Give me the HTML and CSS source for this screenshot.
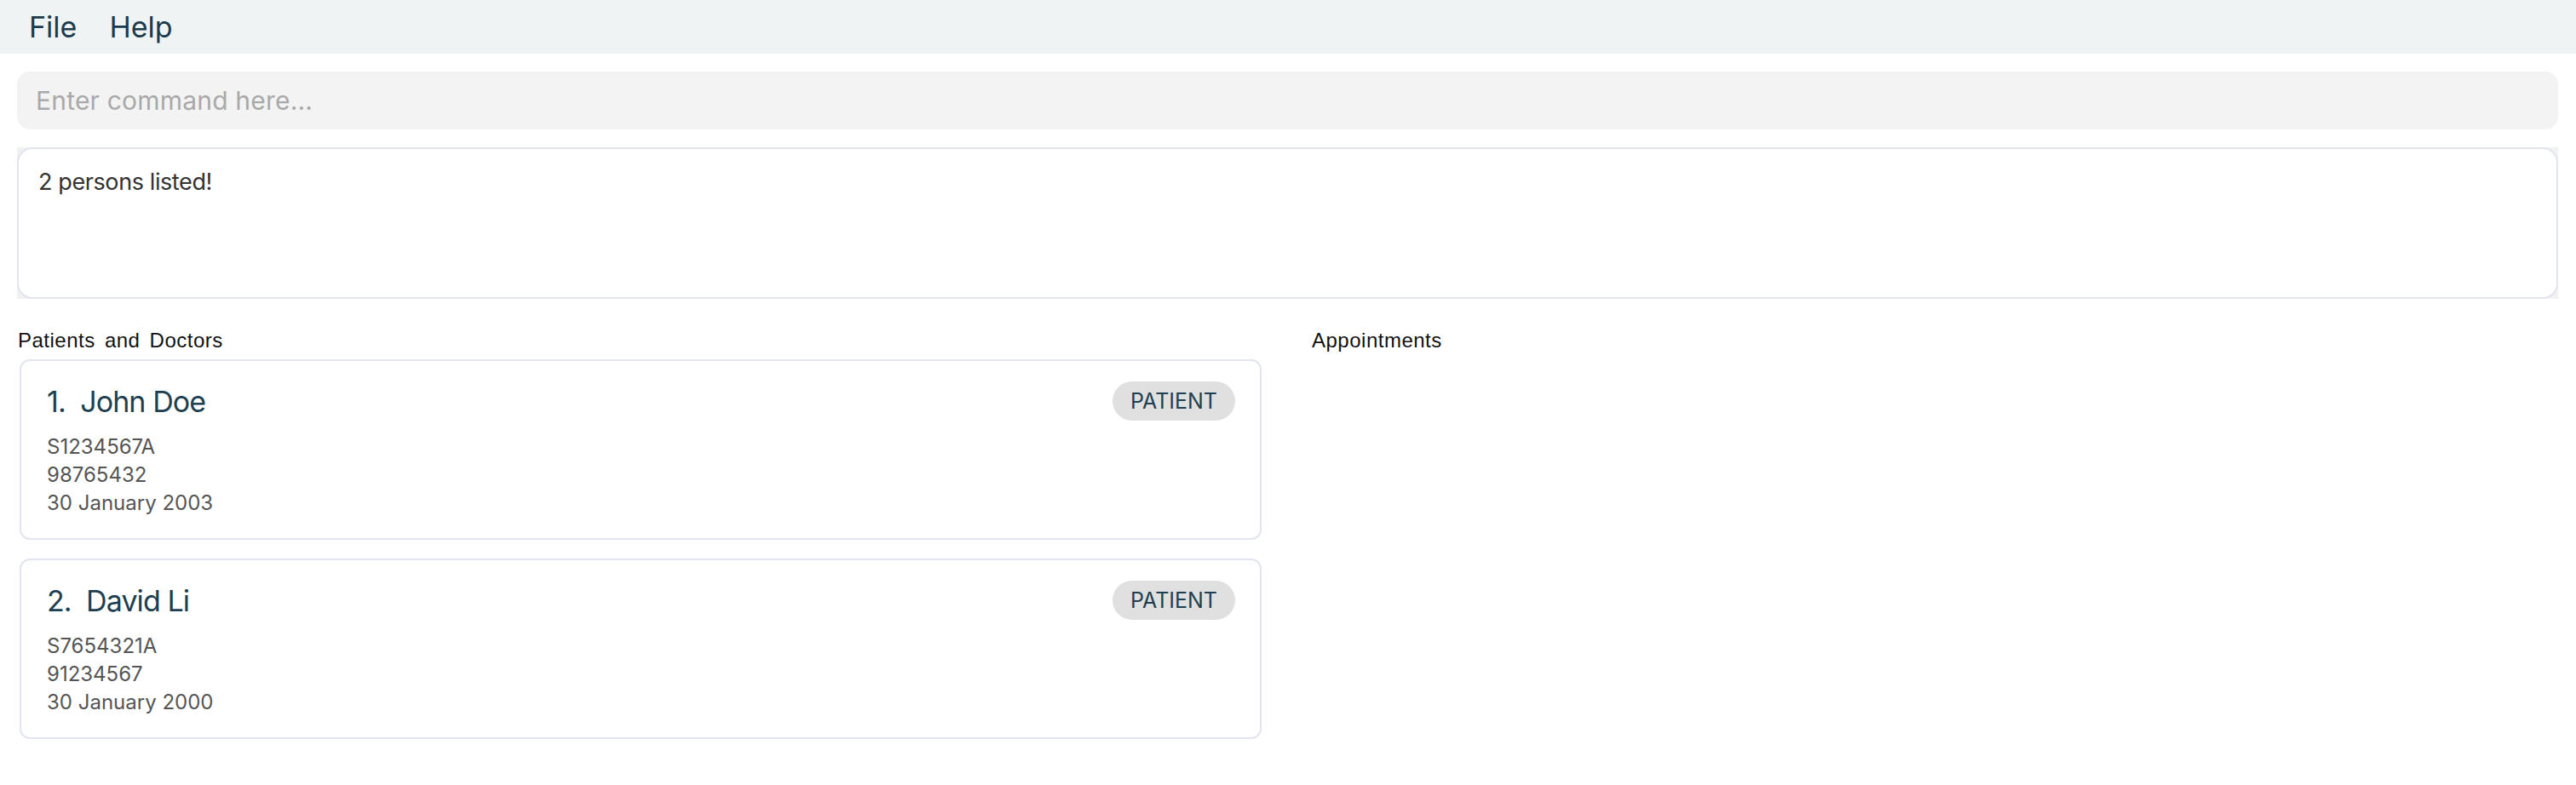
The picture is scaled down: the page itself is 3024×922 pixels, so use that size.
FILE: index.html
```html
<!DOCTYPE html>
<html>
<head>
<meta charset="utf-8">
<link rel="stylesheet" href="styles.css">
</head>
<body>
<div class="menubar">
  <span class="menu-item">File</span>
  <span class="menu-item">Help</span>
</div>
<main class="content">
  <div class="command-box"><span class="placeholder">Enter command here...</span></div>
  <div class="result-wrap">
    <div class="result-box">2 persons listed!</div>
  </div>
  <div class="panes">
    <section class="pane pane-left">
      <div class="pane-title">Patients and Doctors</div>
      <div class="card">
        <div class="card-head">
          <div class="name">1.&nbsp; John Doe</div>
          <span class="badge">PATIENT</span>
        </div>
        <div class="details">
          <div>S1234567A</div>
          <div>98765432</div>
          <div>30 January 2003</div>
        </div>
      </div>
      <div class="card">
        <div class="card-head">
          <div class="name">2.&nbsp; David Li</div>
          <span class="badge">PATIENT</span>
        </div>
        <div class="details">
          <div>S7654321A</div>
          <div>91234567</div>
          <div>30 January 2000</div>
        </div>
      </div>
    </section>
    <section class="pane pane-right">
      <div class="pane-title">Appointments</div>
    </section>
  </div>
</main>
</body>
</html>
```
FILE: styles.css
```css
html, body {
  margin: 0;
  padding: 0;
  background: #ffffff;
}
body {
  font-family: "Inter", "Liberation Sans", sans-serif;
  width: 3024px;
  height: 922px;
  overflow: hidden;
}
.menubar {
  height: 63px;
  background: #eff3f4;
  display: flex;
  align-items: center;
  padding-left: 34px;
  gap: 38px;
}
.menu-item {
  font-size: 34px;
  line-height: 63px;
  color: #1c3b4c;
}
.content {
  padding: 21px 21px 0 20px;
  display: flex;
  flex-direction: column;
}
.command-box {
  height: 68px;
  background: #f3f3f3;
  border-radius: 15px;
  display: flex;
  align-items: center;
  padding-left: 22px;
}
.placeholder {
  font-size: 30px;
  color: #a9a9a9;
  letter-spacing: 0.2px;
}
.result-wrap {
  margin-top: 21px;
  background: #f1f1f1;
}
.result-box {
  box-sizing: border-box;
  height: 178px;
  background: #ffffff;
  border: 2px solid #e2e4ef;
  border-radius: 18px;
  padding: 22px 23px;
  font-size: 27px;
  letter-spacing: -0.4px;
  color: #333333;
}
.panes {
  display: grid;
  grid-template-columns: 1458px 1fr;
  column-gap: 61px;
  margin-top: 35px;
  padding-left: 3px;
}
.pane-title {
  font-family: "Liberation Sans", Arial, sans-serif;
  font-size: 24px;
  line-height: 27px;
  letter-spacing: 0.5px;
  word-spacing: 4px;
  color: #111111;
  margin-bottom: 9px;
  margin-left: -2px;
}
.card {
  box-sizing: border-box;
  height: 212px;
  border: 2px solid #e2e4ef;
  border-radius: 12px;
  padding: 24px 29px 0 30px;
  margin-bottom: 22px;
  background: #ffffff;
}
.card-head {
  display: flex;
  align-items: center;
  justify-content: space-between;
  height: 46px;
}
.name {
  font-size: 34px;
  color: #1d3f51;
  letter-spacing: -0.9px;
}
.badge {
  height: 46px;
  box-sizing: border-box;
  padding: 0 21px;
  border-radius: 23px;
  background: #e0e0e0;
  color: #1e4050;
  font-size: 25px;
  display: flex;
  align-items: center;
}
.details {
  margin-top: 14px;
  font-size: 24px;
  line-height: 33px;
  color: #555555;
}
```
